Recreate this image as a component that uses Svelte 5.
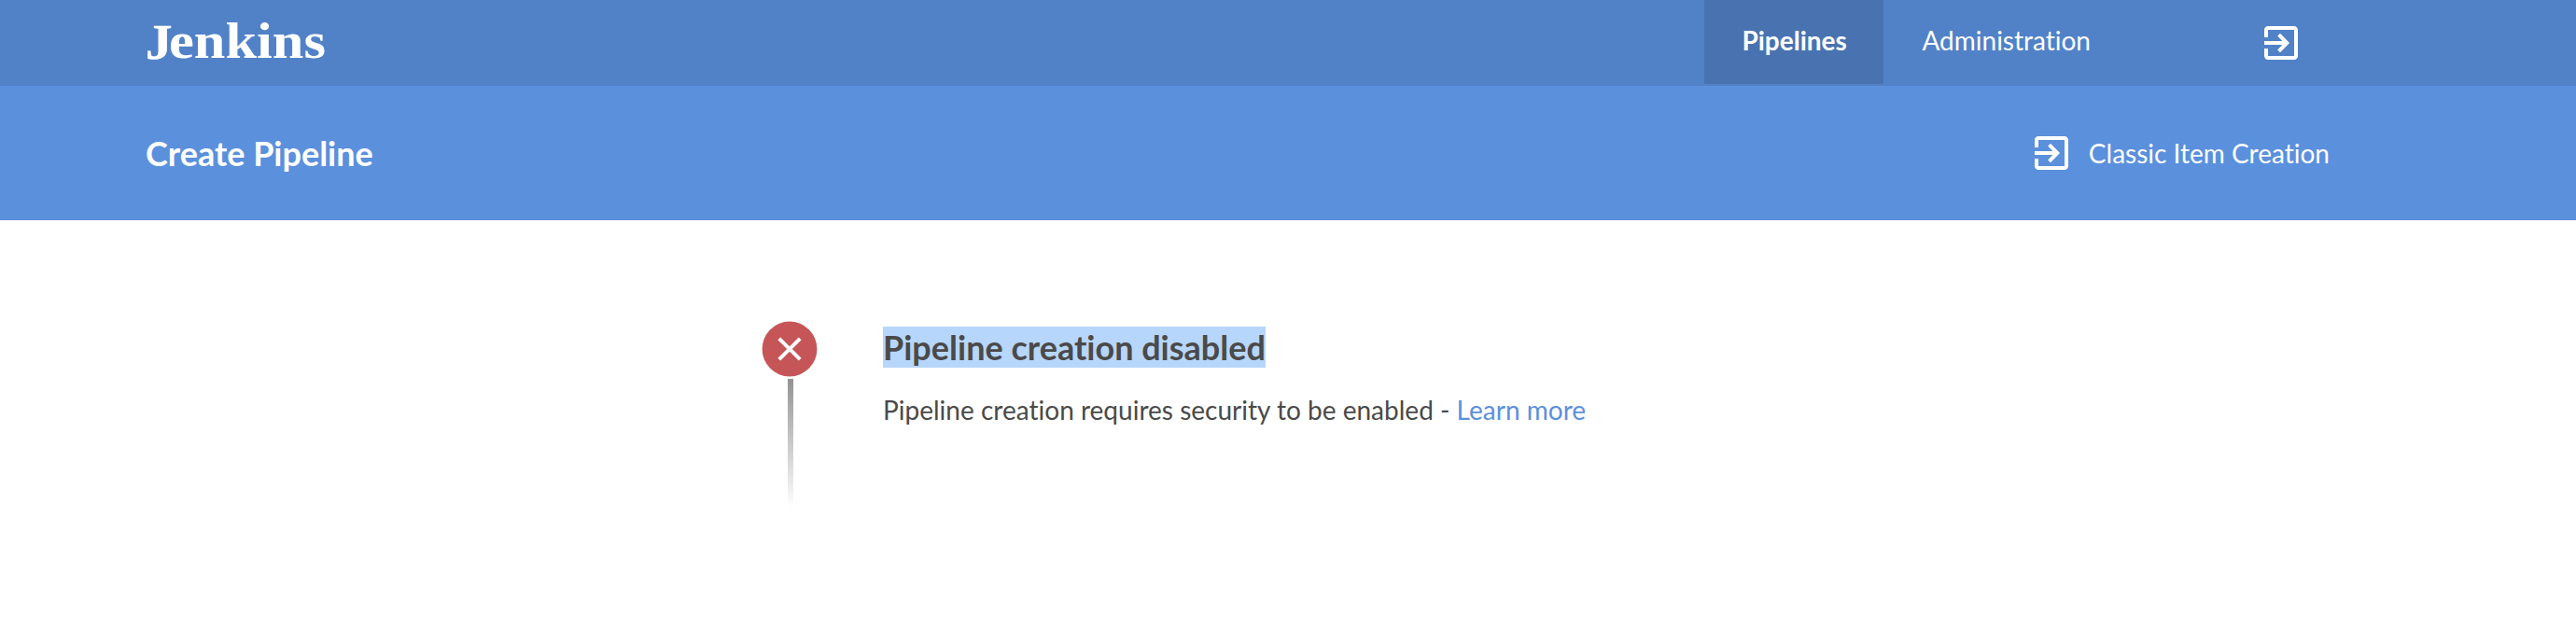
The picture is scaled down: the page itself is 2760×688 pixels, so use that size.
<script>
  const tabs = [
    { label: 'Pipelines', active: true },
    { label: 'Administration', active: false }
  ];
</script>

{#snippet exitIcon()}
  <svg class="exit" viewBox="0 0 36 36" aria-hidden="true">
    <path
      fill="currentColor"
      d="M14.2 25.4 17 28.2 27 18 17 7.8 14.2 10.6 19.3 16H0v4h19.3zM32 0H4C1.8 0 0 1.8 0 4v8h4V4h28v28H4v-8H0v8c0 2.2 1.8 4 4 4h28c2.2 0 4-1.8 4-4V4c0-2.2-1.8-4-4-4z"
    />
  </svg>
{/snippet}

<div class="page">
  <header class="topbar">
    <svg class="logo" viewBox="0 0 200 90" role="img" aria-label="Jenkins">
      <text class="initial" x="0" y="63" textLength="28.5" lengthAdjust="spacingAndGlyphs">J</text>
      <text x="25" y="61.5" textLength="168" lengthAdjust="spacingAndGlyphs">enkins</text>
    </svg>
    <nav>
      {#each tabs as tab}
        <a class="tab" class:active={tab.active}>{tab.label}</a>
      {/each}
    </nav>
    <span class="logout">{@render exitIcon()}</span>
  </header>

  <section class="subbar">
    <h1>Create Pipeline</h1>
    <a class="classic">{@render exitIcon()}<span>Classic Item Creation</span></a>
  </section>

  <main>
    <div class="rail">
      <svg class="status" viewBox="0 0 60 60" aria-hidden="true">
        <circle cx="30" cy="30" r="29.4" fill="#c65558" />
        <path d="M18.8 18.8 41.2 41.2M41.2 18.8 18.8 41.2" stroke="#fff" stroke-width="4" />
      </svg>
      <div class="line"></div>
    </div>
    <div class="message">
      <h2><span>Pipeline creation disabled</span></h2>
      <p>Pipeline creation requires security to be enabled - <a>Learn more</a></p>
    </div>
  </main>
</div>

<style>
  :global(body) {
    background: #fff;
  }
  .page {
    height: 688px;
    overflow: hidden;
    font-family: Lato, sans-serif;
    font-size: 28px;
    font-variant-ligatures: none;
    -webkit-font-smoothing: antialiased;
    color: #4a4a4a;
  }
  .topbar {
    box-sizing: border-box;
    height: 92px;
    padding: 0 298px 0 156px;
    display: flex;
    align-items: flex-start;
    background: #5182c7;
    color: #fff;
  }
  .logo {
    width: 200px;
    height: 90px;
    flex: none;
    overflow: visible;
  }
  .logo text {
    font: 700 55px 'Liberation Serif', serif;
    fill: #fff;
  }
  .logo .initial {
    font-size: 52px;
    stroke: #fff;
    stroke-width: 0.5px;
  }
  nav {
    display: flex;
    gap: 1px;
    margin-left: auto;
  }
  .tab {
    height: 90px;
    padding: 0 40px;
    line-height: 87px;
  }
  .tab.active {
    width: 112px;
    background: #4873b0;
    font-weight: 700;
  }
  .logout {
    margin: 28px 0 0 146px;
    display: flex;
  }
  .exit {
    width: 36px;
    height: 36px;
    flex: none;
  }
  .subbar {
    box-sizing: border-box;
    height: 144px;
    padding: 0 264px 0 156px;
    display: flex;
    align-items: center;
    justify-content: space-between;
    background: #5b90dc;
    color: #fff;
  }
  h1,
  h2 {
    margin: 0;
    font-size: 36px;
    line-height: 44px;
    font-weight: 700;
  }
  .classic {
    display: flex;
    align-items: center;
    gap: 22px;
  }
  .classic span {
    line-height: 34px;
    padding-bottom: 1px;
  }
  main {
    display: flex;
    padding: 108px 0 0 816px;
  }
  .rail {
    width: 60px;
    display: flex;
    flex-direction: column;
    align-items: center;
  }
  .status {
    width: 60px;
    height: 60px;
  }
  .line {
    width: 6px;
    height: 138px;
    margin: 2px 0 0 2px;
    background: linear-gradient(#949393, #fff);
  }
  .message {
    margin: 6px 0 0 70px;
  }
  h2 span {
    display: inline-block;
    background: #b7d6fb;
  }
  p {
    margin: 27px 0 0;
    line-height: 36px;
    letter-spacing: 0.01px;
  }
  p a {
    color: #5b90dc;
  }
</style>
